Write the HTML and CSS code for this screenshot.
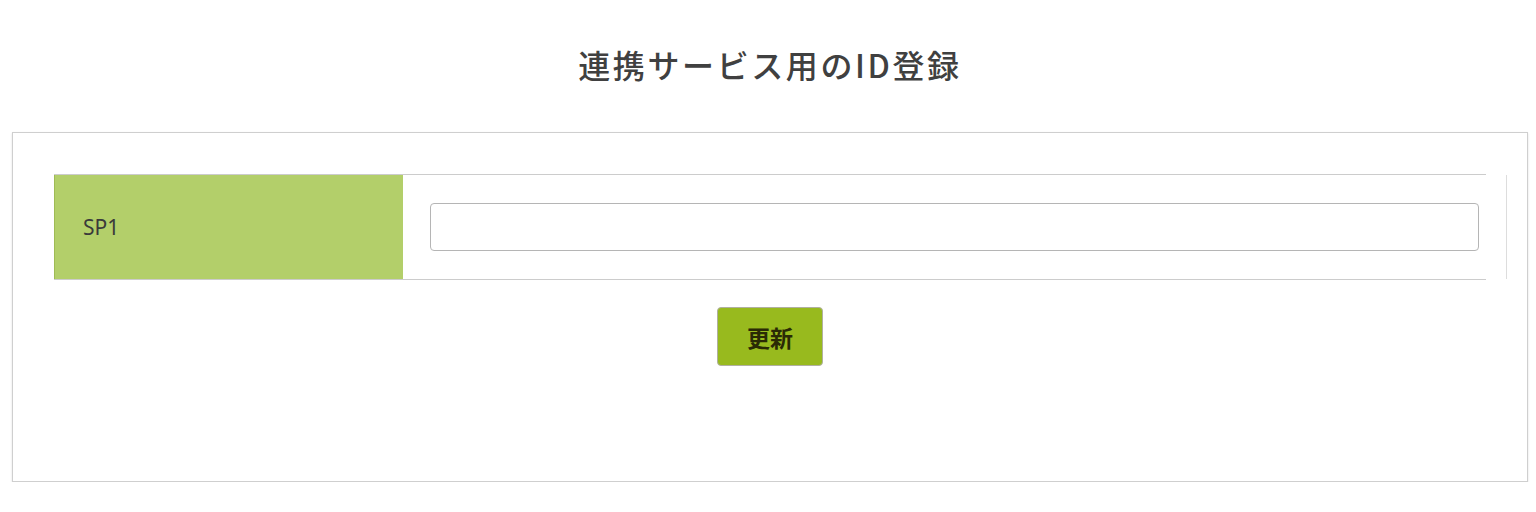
FILE: index.html
```html
<!DOCTYPE html>
<html lang="ja">
<head>
<meta charset="utf-8">
<title>連携サービス用のID登録</title>
<link rel="stylesheet" href="styles.css">
</head>
<body>
<h1 class="page-title">連携サービス用のID登録</h1>
<section class="card">
  <div class="form-row">
    <div class="form-label">SP1</div>
    <div class="form-value"><input class="text-input" type="text"></div>
  </div>
  <div class="actions">
    <button class="btn-update" type="button">更新</button>
  </div>
</section>
</body>
</html>
```

FILE: styles.css
```css
html, body {
  margin: 0;
  padding: 0;
  background: #fff;
}
body {
  font-family: "Noto Sans CJK JP", "Noto Sans", sans-serif;
  color: #333;
  padding: 0 8px 0 12px;
}
.page-title {
  margin: 0;
  padding-top: 40px;
  height: 132px;
  box-sizing: border-box;
  text-align: center;
  font-size: 32px;
  font-weight: 500;
  letter-spacing: 2.6px;
  line-height: 48px;
  color: #404040;
}
.card {
  width: 1516px;
  height: 350px;
  box-sizing: border-box;
  border: 1px solid #cfcfcf;
  box-shadow: 0 1px 2px rgba(0,0,0,0.12);
  padding: 41px 41px 0 41px;
}
.form-row {
  display: flex;
  width: 1432px;
  height: 106px;
  box-sizing: border-box;
  border-top: 1px solid #cccccc;
  border-bottom: 1px solid #cccccc;
}
.form-label {
  flex: 0 0 349px;
  box-sizing: border-box;
  background: #b3cf6a;
  border-left: 1px solid #9fbb55;
  padding-left: 28px;
  display: flex;
  align-items: center;
  font-family: "Noto Sans", sans-serif;
  font-size: 21px;
  color: #3a3a3a;
}
.form-value {
  flex: 0 0 1104px;
  box-sizing: border-box;
  border-right: 1px solid #dddddd;
  padding: 0 27px;
  display: flex;
  align-items: center;
}
.text-input {
  width: 100%;
  height: 48px;
  box-sizing: border-box;
  border: 1px solid #b5b5b5;
  border-radius: 4px;
  font-size: 16px;
  padding: 0 10px;
  outline: none;
}
.actions {
  display: flex;
  justify-content: center;
  padding-top: 27px;
}
.btn-update {
  width: 106px;
  height: 59px;
  background: #98ba1e;
  border: 1px solid #b0b0a0;
  border-radius: 4px;
  font-family: "Noto Sans CJK JP", sans-serif;
  font-size: 23px;
  font-weight: 700;
  color: #2a2a05;
  cursor: pointer;
}
```
